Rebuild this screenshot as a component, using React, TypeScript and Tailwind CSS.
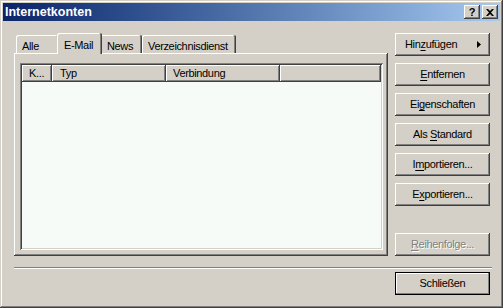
const raised =
  "shadow-[inset_-1px_-1px_#404040,inset_1px_1px_#ffffff,inset_-2px_-2px_#808080]";

function Btn({
  children,
  className = "justify-center text-black",
}: {
  children: React.ReactNode;
  className?: string;
}) {
  return (
    <div
      className={`w-[95px] h-[23px] flex items-center bg-[#d4d0c8] text-[11px] tracking-[-0.35px] ${raised} ${className}`}
    >
      {children}
    </div>
  );
}

function U({ children }: { children: React.ReactNode }) {
  return <span className="underline decoration-1 underline-offset-[2px]">{children}</span>;
}

export default function App() {
  return (
    <div className="w-[503px] h-[308px] p-[3px] flex flex-col bg-[#d4d0c8] font-['Liberation_Sans',Arial,sans-serif] text-black shadow-[inset_-1px_-1px_#404040,inset_1px_1px_#d4d0c8,inset_-2px_-2px_#808080,inset_2px_2px_#ffffff]">
      {/* title bar */}
      <div className="h-[18px] flex items-center bg-linear-to-r from-[#0a246a] to-[#a6caf0] pl-[2px] pr-[2px]">
        <span className="text-white font-bold text-[12.5px] leading-none">Internetkonten</span>
        <div className="ml-auto flex gap-[2px]">
          <div className={`w-[16px] h-[14px] bg-[#d4d0c8] flex items-center justify-center text-[11px] font-bold leading-none ${raised}`}>
            ?
          </div>
          <div className={`w-[16px] h-[14px] bg-[#d4d0c8] flex items-center justify-center ${raised}`}>
            <svg width="8" height="7" viewBox="0 0 8 7">
              <path d="M0 0h2l2 2l2-2h2l-3 3.5l3 3.5h-2l-2-2l-2 2h-2l3-3.5z" fill="#000" />
            </svg>
          </div>
        </div>
      </div>

      {/* body */}
      <div className="flex-1 flex flex-col pt-[12px] pl-[11px] pr-[10px] text-[11px] tracking-[-0.35px]">
        <div className="flex gap-[7px] h-[223px]">
          {/* tab control */}
          <div className="w-[374px] flex flex-col">
            <div className="h-[20px] flex items-end pl-[2px] relative z-10">
              <div className="w-[43px] h-[18px] pl-[6px] pt-[3px] rounded-tl-[2px] rounded-tr-[2px] shadow-[inset_-1px_0_#404040,inset_1px_1px_#ffffff,inset_-2px_0_#808080]">
                Alle
              </div>
              <div className="relative z-10 w-[45px] h-[21px] -mx-[2px] -mb-[1px] pl-[7px] pt-[4px] bg-[#d4d0c8] rounded-tl-[2px] rounded-tr-[2px] shadow-[inset_-1px_0_#404040,inset_1px_1px_#ffffff,inset_-2px_0_#808080]">
                E-Mail
              </div>
              <div className="w-[42px] h-[18px] pl-[7px] pt-[3px] rounded-tl-[2px] rounded-tr-[2px] shadow-[inset_-1px_0_#404040,inset_1px_1px_#ffffff,inset_-2px_0_#808080]">
                News
              </div>
              <div className="w-[94px] h-[18px] pl-[6px] pt-[3px] rounded-tl-[2px] rounded-tr-[2px] shadow-[inset_-1px_0_#404040,inset_1px_1px_#ffffff,inset_-2px_0_#808080]">
                Verzeichnisdienst
              </div>
            </div>
            <div className="flex-1 flex pt-[10px] pl-[6px] pr-[5px] pb-[6px] shadow-[inset_-1px_-1px_#404040,inset_1px_1px_#ffffff,inset_-2px_-2px_#808080]">
              <div className="flex-1 flex flex-col p-[2px] bg-[#f7fbf7] shadow-[inset_1px_1px_#808080,inset_-1px_-1px_#ffffff,inset_2px_2px_#404040,inset_-2px_-2px_#d4d0c8]">
                <div className="h-[17px] flex leading-[17px]">
                  <div className={`w-[30px] pl-[7px] bg-[#d4d0c8] ${raised}`}>K...</div>
                  <div className={`w-[114px] pl-[8px] bg-[#d4d0c8] ${raised}`}>Typ</div>
                  <div className={`w-[114px] pl-[7px] bg-[#d4d0c8] ${raised}`}>Verbindung</div>
                  <div className={`flex-1 bg-[#d4d0c8] ${raised}`} />
                </div>
              </div>
            </div>
          </div>

          {/* buttons */}
          <div className="w-[95px] flex flex-col gap-[7px]">
            <Btn className="text-black justify-between pl-[10px] pr-[9px]">
              <span>
                Hin<U>z</U>ufügen
              </span>
              <svg width="4" height="7" viewBox="0 0 4 7">
                <path d="M0 0l4 3.5l-4 3.5z" fill="#000" />
              </svg>
            </Btn>
            <Btn>
              <span>
                <U>E</U>ntfernen
              </span>
            </Btn>
            <Btn>
              <span>
                Ei<U>g</U>enschaften
              </span>
            </Btn>
            <Btn>
              <span>
                Als <U>S</U>tandard
              </span>
            </Btn>
            <Btn>
              <span>
                I<U>m</U>portieren...
              </span>
            </Btn>
            <Btn>
              <span>
                E<U>x</U>portieren...
              </span>
            </Btn>
            <Btn className="mt-auto justify-center text-[#808080] [text-shadow:1px_1px_0_#ffffff]">
              <span>
                <U>R</U>eihenfolge...
              </span>
            </Btn>
          </div>
        </div>

        <div className="mt-[11px] w-[478px] h-[2px] border-t border-t-[#808080] border-b border-b-white" />

        <div className="mt-[3px] self-end w-[95px] h-[23px] flex items-center justify-center bg-[#d4d0c8] shadow-[inset_0_0_0_1px_#000000,inset_-2px_-2px_#808080,inset_2px_2px_#ffffff]">
          Schließen
        </div>
      </div>
    </div>
  );
}
